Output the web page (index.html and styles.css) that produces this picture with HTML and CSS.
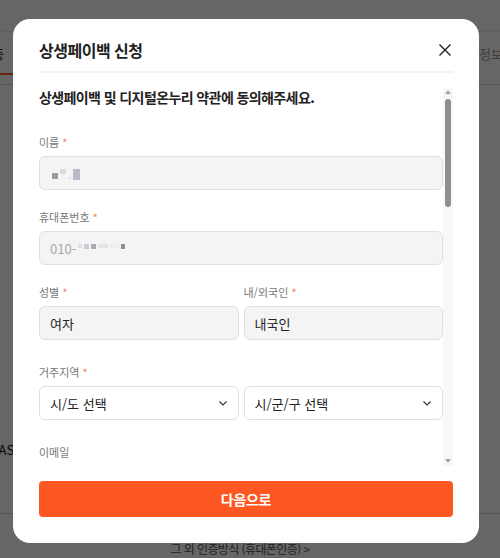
FILE: index.html
```html
<!DOCTYPE html>
<html lang="ko">

<head>
    <meta charset="UTF-8">
    <meta name="viewport" content="width=device-width, initial-scale=1.0">
    <title>상생페이백 신청</title>
    <link rel="stylesheet" href="styles.css">
</head>

<body>
    <div class="page">
        <div class="topbar"></div>
        <nav class="tabs">
            <span class="tab active">간편인증</span>
            <span class="tab">공동인증서</span>
            <span class="tab last">개인정보</span>
        </nav>
        <div class="tabs-line"></div>
        <div class="page-body">
            <p class="pass">PASS</p>
        </div>
        <div class="page-footer">
            <a href="#" class="other-auth">그 외 인증방식 (휴대폰인증) &gt;</a>
        </div>
    </div>

    <div class="dim"></div>

    <div class="modal" role="dialog">
        <div class="modal-header">
            <h2>상생페이백 신청</h2>
            <button class="close" aria-label="닫기">
                <svg width="12" height="12" viewBox="0 0 12 12">
                    <path d="M0.5 0.5 L11.5 11.5 M11.5 0.5 L0.5 11.5" stroke="#222" stroke-width="1.4" fill="none" />
                </svg>
            </button>
        </div>
        <div class="divider"></div>

        <div class="modal-body">
            <div class="scroll-content">
                <h3>상생페이백 및 디지털온누리 약관에 동의해주세요.</h3>

                <div class="field first">
                    <label>이름 <em>*</em></label>
                    <div class="input readonly">
                        <span class="blur">
                            <i class="px" style="background:#9a9aa0;width:6px;height:6px;margin-top:7px"></i>
                            <i class="px" style="background:#d8dbe2;width:6px;height:5px"></i>
                            <i class="px" style="background:#e4e6ec;width:3px;height:2px;margin-top:11px"></i>
                            <i class="px" style="background:#b9bcc6;width:7px;height:11px"></i>
                        </span>
                    </div>
                </div>

                <div class="field">
                    <label>휴대폰번호 <em>*</em></label>
                    <div class="input readonly muted">010-<span class="blur">
                            <i class="px" style="background:#dfe1e6;width:4px;height:4px"></i>
                            <i class="px" style="background:#c9cbd1;width:5px;height:5px"></i>
                            <i class="px" style="background:#a9abb3;width:5px;height:5px"></i>
                            <i class="px" style="background:#e2e4e9;width:10px;height:4px"></i>
                            <i class="px" style="background:#eceef2;width:9px;height:4px"></i>
                            <i class="px" style="background:#8f9099;width:4px;height:5px"></i>
                        </span></div>
                </div>

                <div class="row">
                    <div class="field">
                        <label>성별 <em>*</em></label>
                        <div class="input readonly">여자</div>
                    </div>
                    <div class="field">
                        <label>내/외국인 <em>*</em></label>
                        <div class="input readonly">내국인</div>
                    </div>
                </div>

                <div class="row spaced">
                    <div class="field">
                        <label>거주지역 <em>*</em></label>
                        <div class="input select">시/도 선택
                            <svg width="8" height="5" viewBox="0 0 8 5"><path d="M0.5 0.5 L4 4 L7.5 0.5" stroke="#333" stroke-width="1.1" fill="none" /></svg>
                        </div>
                    </div>
                    <div class="field">
                        <label class="hidden">시/군/구</label>
                        <div class="input select">시/군/구 선택
                            <svg width="8" height="5" viewBox="0 0 8 5"><path d="M0.5 0.5 L4 4 L7.5 0.5" stroke="#333" stroke-width="1.1" fill="none" /></svg>
                        </div>
                    </div>
                </div>

                <div class="field spaced">
                    <label>이메일</label>
                    <div class="input">example@email.com</div>
                </div>

                <div class="terms">
                    <div class="term all">약관 전체 동의</div>
                    <div class="term">[필수] 상생페이백 서비스 이용약관</div>
                    <div class="term">[필수] 개인정보 수집 및 이용 동의</div>
                    <div class="term">[필수] 개인정보 제3자 제공 동의</div>
                    <div class="term">[필수] 디지털온누리 서비스 이용약관</div>
                    <div class="term">[선택] 마케팅 정보 수신 동의</div>
                </div>
            </div>

            <div class="scrollbar" aria-hidden="true">
                <span class="arrow up"></span>
                <span class="thumb"></span>
                <span class="arrow down"></span>
            </div>
        </div>

        <div class="modal-footer">
            <button class="next">다음으로</button>
        </div>
    </div>
</body>

</html>
```

FILE: styles.css
```css
html,
body {
    margin: 0;
    padding: 0;
    height: 100%;
    overflow: hidden;
}

body {
    font-family: "Noto Sans CJK KR", "Noto Sans", sans-serif;
    color: #222;
    background: #fff;
}

/* page behind the dialog */
.page {
    height: 100%;
    display: flex;
    flex-direction: column;
}

.topbar {
    height: 31px;
    border-bottom: 1px solid #f0f0f0;
}

.tabs {
    display: flex;
    justify-content: space-between;
    height: 43px;
}

.tab {
    font-size: 13px;
    line-height: 43px;
    color: #999;
    white-space: nowrap;
}

.tab.active {
    width: 70px;
    margin-left: -57px;
    padding-right: 9px;
    box-sizing: border-box;
    text-align: right;
    color: #222;
    border-bottom: 2px solid #ff5722;
}

.tab.last {
    width: 52px;
    margin-right: -7px;
}

.tabs-line {
    margin-top: 9px;
    border-bottom: 1px solid #d6d6d6;
}

.page-body {
    flex: 1;
}

.pass {
    margin: 355px 0 0 -9px;
    font-size: 13px;
    color: #111;
}

.page-footer {
    height: 44px;
    border-top: 1px solid #ccc;
    display: flex;
    justify-content: center;
    align-items: flex-end;
}

.other-auth {
    margin-left: -20px;
    margin-bottom: 1px;
    font-size: 12px;
    letter-spacing: -0.6px;
    color: #555;
    text-decoration: none;
}

.dim {
    position: fixed;
    inset: 0;
    background: rgba(0, 0, 0, 0.6);
}

/* dialog */
.modal {
    position: fixed;
    top: 19px;
    left: 13px;
    width: 466px;
    height: 524px;
    background: #fff;
    border-radius: 17px;
    display: flex;
    flex-direction: column;
    box-sizing: border-box;
}

.modal-header {
    display: flex;
    justify-content: space-between;
    align-items: center;
    padding: 20px 26px 0;
}

.modal-header h2 {
    margin: 0;
    font-size: 16px;
    line-height: 22px;
    font-weight: bold;
    letter-spacing: -0.5px;
}

.close {
    border: 0;
    background: none;
    padding: 0;
    width: 12px;
    height: 12px;
    margin-right: 2px;
    display: flex;
}

.divider {
    margin: 10px 26px 0;
    height: 2px;
    background: #f3f3f3;
}

.modal-body {
    flex: 1;
    min-height: 0;
    margin: 14px 26px 0;
    display: flex;
}

.scroll-content {
    flex: 1;
    min-width: 0;
    overflow: hidden;
}

.scrollbar {
    width: 10px;
    background: #f8f8f8;
    display: flex;
    flex-direction: column;
    align-items: center;
    padding: 3px 0;
}

.arrow {
    width: 0;
    height: 0;
    border-left: 3px solid transparent;
    border-right: 3px solid transparent;
}

.arrow.up {
    border-bottom: 4px solid #a3a3a3;
}

.arrow.down {
    margin-top: auto;
    border-top: 4px solid #a3a3a3;
}

.thumb {
    margin-top: 5px;
    width: 6px;
    height: 108px;
    border-radius: 3px;
    background: #8f8f8f;
}

.scroll-content h3 {
    margin: 0;
    font-size: 14px;
    line-height: 20px;
    font-weight: bold;
    letter-spacing: -0.6px;
}

.field {
    margin-top: 19px;
    flex: 1;
    min-width: 0;
}

.field.first {
    margin-top: 27px;
}

.spaced,
.row.spaced .field {
    margin-top: 24px;
}

.row {
    display: flex;
    gap: 5px;
}

.row .field {
    margin-top: 19px;
}

.row.spaced {
    margin-top: 0;
}

label {
    display: block;
    font-size: 11px;
    line-height: 17px;
    margin-bottom: 5px;
    color: #777;
}

label.hidden {
    visibility: hidden;
}

label em {
    font-style: normal;
    color: #ff7a55;
}

.input {
    height: 34px;
    box-sizing: border-box;
    border: 1px solid #e0e0e0;
    border-radius: 6px;
    padding: 0 10px;
    display: flex;
    align-items: center;
    font-size: 13px;
    color: #222;
    background: #fff;
}

.input.readonly {
    background: #f4f4f4;
}

.input.muted {
    color: #a8a8a8;
}

.input.select {
    justify-content: space-between;
}

.input.select svg {
    margin-right: 1px;
}

.blur {
    display: flex;
    align-items: flex-start;
    height: 14px;
    margin-left: 2px;
}

.px {
    display: block;
    margin-right: 2px;
    margin-top: 3px;
}

.terms {
    margin-top: 28px;
}

.term {
    font-size: 13px;
    line-height: 20px;
    padding: 25px 0;
    border-bottom: 1px solid #f2f2f2;
    color: #444;
}

.term.all {
    font-weight: bold;
    color: #222;
}

.modal-footer {
    padding: 15px 26px 26px;
}

.next {
    width: 100%;
    height: 36px;
    border: 0;
    border-radius: 4px;
    background: #ff5722;
    color: #fff;
    font-family: inherit;
    font-size: 14px;
    font-weight: bold;
    letter-spacing: -0.3px;
}
```
